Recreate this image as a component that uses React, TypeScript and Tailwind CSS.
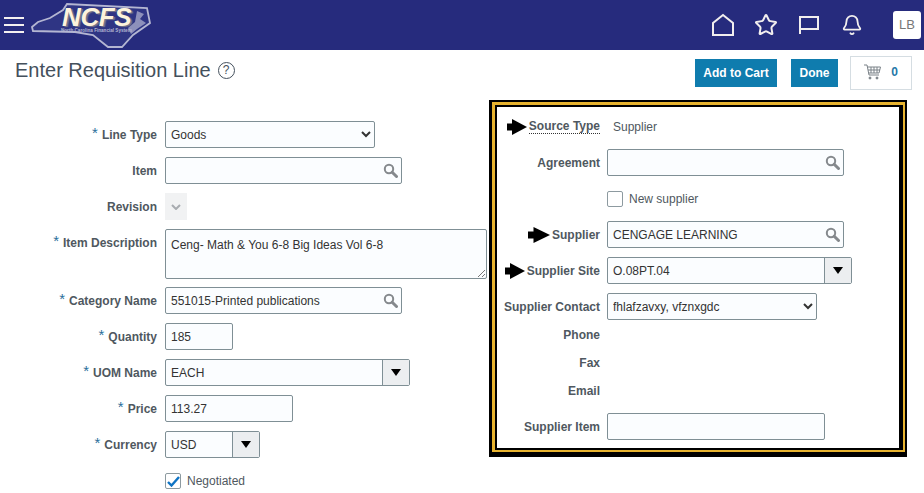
import { Bell, Star } from "lucide-react";
import type { ReactNode } from "react";

const inputCls =
  "h-[27px] rounded-[2px] border border-[#7f8f95] bg-[#fbfdff] px-[5px] text-[12px] text-[#333] outline-none";
const labelCls = "text-[12px] font-bold text-[#4f5860] whitespace-nowrap";

function Req() {
  return <span className="relative top-[-2px] mr-[4px] text-[15px] font-normal leading-none text-[#2b6f9b]">*</span>;
}

function Magnifier() {
  return (
    <svg width="15" height="15" viewBox="0 0 15 15" fill="none" className="mr-[-2px] shrink-0">
      <circle cx="6" cy="6" r="4.2" stroke="#85898d" strokeWidth="2" />
      <path d="M9.2 9.2 13.5 13.5" stroke="#85898d" strokeWidth="3" strokeLinecap="round" />
    </svg>
  );
}

function Arrow({ w = 20 }: { w?: number }) {
  return (
    <svg width={w} height="16" viewBox="0 0 20 16" preserveAspectRatio="none" className="mr-[2px] shrink-0">
      <path d="M0 4.5H5V0L20 8 5 16V11.5H0Z" fill="#000" />
    </svg>
  );
}

function SearchInput({ value, w }: { value?: string; w: string }) {
  return (
    <div className={`flex items-center justify-between ${inputCls} ${w}`}>
      <span>{value}</span>
      <Magnifier />
    </div>
  );
}

function ComboInput({ value, w, btn }: { value: string; w: string; btn: string }) {
  return (
    <div className={`flex h-[27px] rounded-[2px] border border-[#7f8f95] bg-[#fbfdff] text-[12px] text-[#333] ${w}`}>
      <span className="flex flex-1 items-center px-[5px]">{value}</span>
      <span className={`flex items-center justify-center border-l border-[#7f8f95] bg-[#eceef0] ${btn}`}>
        <svg width="10" height="7" viewBox="0 0 10 7">
          <path d="M0 0H10L5 7Z" fill="#000" />
        </svg>
      </span>
    </div>
  );
}

function Row({ label, children, h = "h-[27px]" }: { label?: ReactNode; children?: ReactNode; h?: string }) {
  return (
    <div className={`flex items-start ${h}`}>
      <div className={`flex h-[27px] w-[var(--lw)] shrink-0 items-center justify-end ${labelCls}`}>{label}</div>
      <div className="ml-[var(--lg)]">{children}</div>
    </div>
  );
}

function Logo() {
  return (
    <div className="relative ml-[7px] h-[50px] w-[125px]">
      <svg width="125" height="50" viewBox="0 0 125 50" className="absolute left-0 top-0">
        <path
          d="M1 27 7 22 19 18 32 10 36 4 116 8 119 23 102 35 91 47 77 47 62 35 44 32 2 31Z"
          fill="#2f3584"
          stroke="#b4b6d2"
          strokeWidth="1.8"
        />
        <path d="M106 11 113 14 109 19 115 23 106 29 100 34 97 28 104 22Z" fill="#8d90bb" />
      </svg>
      <span className="absolute left-[31px] top-[6px] text-[26px] font-bold italic leading-[22px] tracking-[-0.4px] text-[#fdf3dc] [text-shadow:2px_1px_1px_#77768a]">
        NCFS
      </span>
      <span className="absolute left-[30px] top-[28px] whitespace-nowrap text-[4.6px] font-bold leading-[5px] text-[#b4b6d2]">
        North Carolina Financial System
      </span>
    </div>
  );
}

export default function App() {
  return (
    <div className="h-[493px] w-[924px] overflow-hidden bg-white font-['Liberation_Sans',Arial,sans-serif]">
      <header className="flex h-[50px] items-center bg-[#262b7d] text-[#f1eeee]">
        <div className="ml-[4px] flex w-[20px] flex-col gap-[5px]">
          <span className="h-[2px] bg-[#f4f0f0]" />
          <span className="h-[2px] bg-[#f4f0f0]" />
          <span className="h-[2px] bg-[#f4f0f0]" />
        </div>
        <Logo />
        <div className="ml-auto flex items-center">
          <svg width="24" height="24" viewBox="0 0 24 24" fill="none" stroke="currentColor" strokeWidth="2" className="mr-[19px]">
            <path d="M2 22V10L12 2 22 10V22Z" />
          </svg>
          <Star size={24} strokeWidth={2} className="mr-[20px]" />
          <svg width="22" height="22" viewBox="0 0 22 22" fill="none" stroke="currentColor" strokeWidth="2" className="mr-[21px]">
            <path d="M2 20V3H20V15H2" />
          </svg>
          <Bell size={22} strokeWidth={2} />
          <div className="ml-[30px] mr-[3px] flex h-[28px] w-[28px] items-center justify-center rounded-[3px] bg-white text-[13px] text-[#777]">
            LB
          </div>
        </div>
      </header>

      <div className="flex h-[50px] items-start">
        <h1 className="ml-[15px] mt-[8px] flex items-center text-[20px] leading-[24px] text-[#44505c]">
          Enter Requisition Line
          <span className="ml-[7px] flex h-[17px] w-[17px] items-center justify-center rounded-full border border-[#44505c] text-[12px] leading-none">
            ?
          </span>
        </h1>
        <div className="ml-auto mr-[12px] mt-[6px] flex items-start">
          <button className="mt-[3px] h-[28px] w-[82px] bg-[#0f7cae] text-[12px] font-bold text-white">Add to Cart</button>
          <button className="ml-[14px] mt-[3px] h-[28px] w-[47px] bg-[#0f7cae] text-[12px] font-bold text-white">Done</button>
          <div className="ml-[12px] flex h-[34px] w-[62px] items-center justify-center gap-[10px] border border-[#d5dde2] pb-[3px]">
            <svg width="17" height="16" viewBox="0 0 17 16" fill="none" stroke="#7b8288" strokeWidth="1">
              <path d="M0 1H3L5 11H15M3.5 3H16.5L15 9H4.5M7 3V9M10 3V9M13 3V9M4 6H16" />
              <circle cx="6" cy="14" r="1" fill="#7b8288" />
              <circle cx="13" cy="14" r="1" fill="#7b8288" />
            </svg>
            <span className="text-[12px] font-bold text-[#1f78a8]">0</span>
          </div>
        </div>
      </div>

      <div className="flex items-start">
        <div className="flex w-[489px] flex-col gap-[9px] pt-[21px] [--lw:157px] [--lg:8px]">
          <Row label={<><Req />Line Type</>}>
            <select className={`${inputCls} w-[210px] !px-[1px]`} defaultValue="Goods">
              <option>Goods</option>
            </select>
          </Row>
          <Row label="Item">
            <SearchInput w="w-[237px]" />
          </Row>
          <Row label="Revision">
            <div className="flex h-[27px] w-[22px] items-center justify-center bg-[#f1f2f3]">
              <svg width="10" height="6" viewBox="0 0 10 6" fill="none" stroke="#a8acb0" strokeWidth="2">
                <path d="M1 1 5 5 9 1" />
              </svg>
            </div>
          </Row>
          <Row label={<><Req />Item Description</>} h="h-[49px]">
            <div className={`${inputCls} relative !h-[50px] w-[322px] pt-[6px]`}>
              Ceng- Math &amp; You 6-8 Big Ideas Vol 6-8
              <svg width="7" height="7" viewBox="0 0 7 7" className="absolute bottom-[1px] right-[1px]" stroke="#777" strokeWidth="1">
                <path d="M7 0 0 7M7 4 4 7" />
              </svg>
            </div>
          </Row>
          <Row label={<><Req />Category Name</>}>
            <SearchInput value="551015-Printed publications" w="w-[237px]" />
          </Row>
          <Row label={<><Req />Quantity</>}>
            <div className={`flex items-center ${inputCls} w-[68px]`}>185</div>
          </Row>
          <Row label={<><Req />UOM Name</>}>
            <ComboInput value="EACH" w="w-[245px]" btn="w-[27px]" />
          </Row>
          <Row label={<><Req />Price</>}>
            <div className={`flex items-center ${inputCls} w-[128px]`}>113.27</div>
          </Row>
          <Row label={<><Req />Currency</>}>
            <ComboInput value="USD" w="w-[95px]" btn="w-[27px]" />
          </Row>
          <div className="ml-[165px] mt-[5px] flex items-center gap-[6px] text-[12px] text-[#4f5860]">
            <span className="flex h-[16px] w-[16px] items-center justify-center rounded-[2px] border border-[#8d9aa0] bg-white">
              <svg width="13" height="11" viewBox="0 0 13 11" fill="none" stroke="#0f74c4" strokeWidth="2.4">
                <path d="M1 6 4.5 9.5 12 1" />
              </svg>
            </span>
            Negotiated
          </div>
        </div>

        <section className="bg-black pb-[5px] pl-[3px] pr-[2px] pt-[2px]">
          <div className="bg-[#e7b32f] pb-[2px] pl-[3px] pr-[2px] pt-[3px]">
            <div className="h-[345px] w-[408px] border-[2px] border-r-[4px] border-black bg-white [--lw:103px] [--lg:7px]">
              <div className="flex flex-col pt-[6px]">
                <div className="flex h-[27px] items-center">
                  <div className={`flex w-[103px] items-center justify-end ${labelCls}`}>
                    <Arrow />
                    <span className="border-b border-dotted border-[#333] leading-[14px]">Source Type</span>
                  </div>
                  <span className="ml-[13px] text-[12px] text-[#4f5860]">Supplier</span>
                </div>
                <div className="mt-[9px]">
                  <Row label="Agreement">
                    <SearchInput w="w-[237px]" />
                  </Row>
                </div>
                <div className="ml-[110px] mt-[9px] flex h-[27px] items-center gap-[6px] text-[12px] text-[#4f5860]">
                  <span className="h-[16px] w-[16px] rounded-[2px] border border-[#8d9aa0]" />
                  New supplier
                </div>
                <div className="mt-[9px]">
                  <Row label={<><Arrow w={22} />Supplier</>}>
                    <SearchInput value="CENGAGE LEARNING" w="w-[237px]" />
                  </Row>
                </div>
                <div className="mt-[9px]">
                  <Row label={<><Arrow />Supplier Site</>}>
                    <ComboInput value="O.08PT.04" w="w-[245px]" btn="w-[27px]" />
                  </Row>
                </div>
                <div className="mt-[9px]">
                  <Row label="Supplier Contact">
                    <select className={`${inputCls} w-[210px] !px-[1px]`} defaultValue="a">
                      <option value="a">fhlafzavxy, vfznxgdc</option>
                    </select>
                  </Row>
                </div>
                <div className="mt-[1px] flex flex-col">
                  <div className={`flex h-[28px] w-[103px] items-center justify-end ${labelCls}`}>Phone</div>
                  <div className={`flex h-[28px] w-[103px] items-center justify-end ${labelCls}`}>Fax</div>
                  <div className={`flex h-[28px] w-[103px] items-center justify-end ${labelCls}`}>Email</div>
                </div>
                <div className="mt-[8px]">
                  <Row label="Supplier Item">
                    <div className={`${inputCls} w-[218px]`} />
                  </Row>
                </div>
              </div>
            </div>
          </div>
        </section>
      </div>
    </div>
  );
}
